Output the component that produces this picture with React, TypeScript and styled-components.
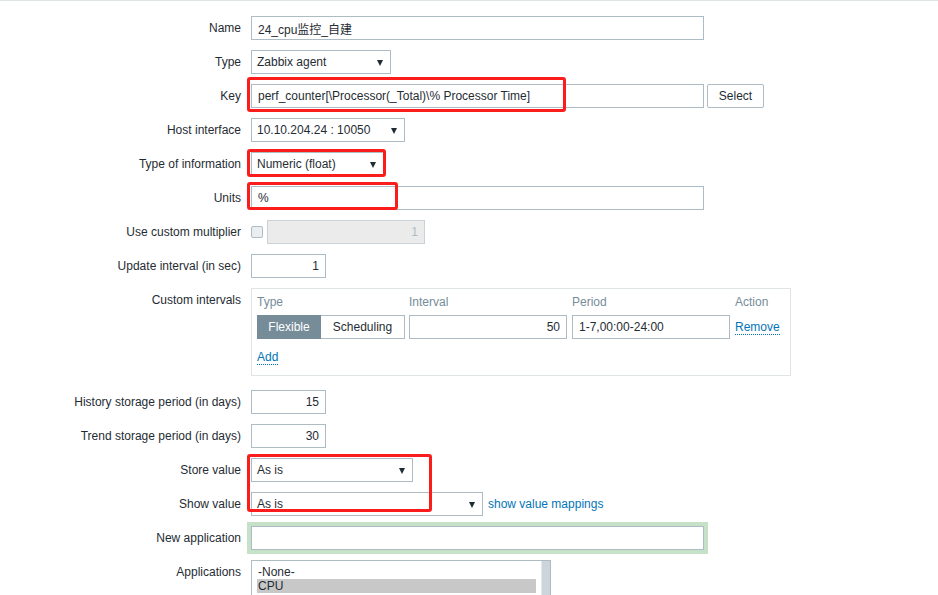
import React from "react";
import styled, { createGlobalStyle } from "styled-components";

const GlobalStyle = createGlobalStyle`
  html, body { margin: 0; padding: 0; background: #ffffff; }
  body {
    font-family: "Liberation Sans", Arial, "Noto Sans CJK SC", sans-serif;
    font-size: 12px;
    color: #1f2c33;
  }
  * { box-sizing: border-box; }
`;

const Page = styled.div`
  position: relative;
  width: 938px;
  height: 595px;
  overflow: hidden;
  background: #ffffff;
`;

const TopRule = styled.div`
  height: 1px;
  background: #dfe4e7;
`;

const Form = styled.div`
  display: flex;
  flex-direction: column;
  gap: 10px;
  padding-top: 15px;
`;

const Row = styled.div<{ $top?: boolean }>`
  display: grid;
  grid-template-columns: 241px auto;
  column-gap: 10px;
  align-items: ${(p) => (p.$top ? "start" : "center")};
`;

const Label = styled.div`
  text-align: right;
  line-height: 24px;
  white-space: nowrap;
  color: #1f2c33;
`;

const Field = styled.div<{ $gap?: number }>`
  display: flex;
  align-items: center;
  gap: ${(p) => p.$gap ?? 0}px;
`;

const TextInput = styled.input<{ $w: number; $right?: boolean }>`
  width: ${(p) => p.$w}px;
  height: 24px;
  margin: 0;
  padding: 0 6px;
  border: 1px solid #acbbc4;
  border-radius: 0;
  background: #ffffff;
  color: #1f2c33;
  font-family: "Liberation Sans", Arial, "Noto Sans CJK SC", sans-serif;
  font-size: 12px;
  text-align: ${(p) => (p.$right ? "right" : "left")};
  outline: none;
  &:disabled {
    background: #ebebeb;
    color: #acbbc4;
    border-color: #c9d2d8;
  }
`;

const FocusInput = styled(TextInput)`
  box-shadow: 0 0 0 4px #c5e2c8;
`;

const Select = styled.div<{ $w: number }>`
  position: relative;
  width: ${(p) => p.$w}px;
  height: 24px;
  padding: 0 20px 0 5px;
  border: 1px solid #acbbc4;
  background: #ffffff;
  display: flex;
  align-items: center;
  white-space: nowrap;
  color: #1f2c33;
  &::after {
    content: "";
    position: absolute;
    right: 7px;
    top: 9px;
    border-left: 3.5px solid transparent;
    border-right: 3.5px solid transparent;
    border-top: 6px solid #1f2c33;
  }
`;

const Button = styled.button`
  height: 24px;
  width: 57px;
  padding: 0;
  border: 1px solid #acbbc4;
  border-radius: 2px;
  background: #ffffff;
  color: #1f2c33;
  font-family: "Liberation Sans", Arial, sans-serif;
  font-size: 12px;
`;

const CheckBox = styled.span`
  width: 12px;
  height: 12px;
  border: 1px solid #acbbc4;
  border-radius: 2px;
  background: #ebeef0;
  display: inline-block;
`;

const Link = styled.span<{ $dotted?: boolean }>`
  color: #0275b8;
  white-space: nowrap;
  line-height: 14px;
  border-bottom: ${(p) => (p.$dotted ? "1px dotted #0275b8" : "none")};
`;

const IntervalBox = styled.div`
  width: 540px;
  margin-bottom: 4px;
  padding: 6px 5px 10px;
  border: 1px solid #dfe4e7;
  display: flex;
  flex-direction: column;
  align-items: flex-start;
`;

const IntervalGrid = styled.div`
  display: grid;
  grid-template-columns: 152px 163px 163px auto;
  row-gap: 6px;
  align-items: center;
  margin-bottom: 11px;
`;

const HeadCell = styled.div`
  color: #768d99;
  line-height: 14px;
`;

const Segmented = styled.div`
  display: flex;
  height: 24px;
`;

const Segment = styled.div<{ $active?: boolean; $w: number }>`
  width: ${(p) => p.$w}px;
  height: 24px;
  display: flex;
  align-items: center;
  justify-content: center;
  border: 1px solid ${(p) => (p.$active ? "#768d99" : "#acbbc4")};
  ${(p) => (p.$active ? "" : "border-left: none;")}
  background: ${(p) => (p.$active ? "#768d99" : "#ffffff")};
  color: ${(p) => (p.$active ? "#ffffff" : "#1f2c33")};
`;

const ListBox = styled.div`
  width: 300px;
  height: 110px;
  border: 1px solid #acbbc4;
  display: flex;
  background: #ffffff;
`;

const Options = styled.div`
  flex: 1;
  padding: 4px 5px 0 5px;
  display: flex;
  flex-direction: column;
`;

const Option = styled.div<{ $selected?: boolean }>`
  line-height: 14px;
  padding-left: 1px;
  background: ${(p) => (p.$selected ? "#c8c8c8" : "transparent")};
  color: #1f2c33;
`;

const ScrollTrack = styled.div`
  width: 9px;
  background: #cdd5dc;
  border-left: 1px solid #e3e8eb;
`;

const Annotation = styled.div<{ $x: number; $y: number; $w: number; $h: number }>`
  position: absolute;
  left: ${(p) => p.$x}px;
  top: ${(p) => p.$y}px;
  width: ${(p) => p.$w}px;
  height: ${(p) => p.$h}px;
  border: 3px solid #fb1c1c;
  border-radius: 3px;
  pointer-events: none;
`;

export default function App() {
  return (
    <Page>
      <GlobalStyle />
      <TopRule />
      <Form>
        <Row>
          <Label>Name</Label>
          <Field>
            <TextInput $w={453} readOnly value="24_cpu监控_自建" />
          </Field>
        </Row>
        <Row>
          <Label>Type</Label>
          <Field>
            <Select $w={140}>Zabbix agent</Select>
          </Field>
        </Row>
        <Row>
          <Label>Key</Label>
          <Field $gap={3}>
            <TextInput $w={453} readOnly value="perf_counter[\Processor(_Total)\% Processor Time]" />
            <Button>Select</Button>
          </Field>
        </Row>
        <Row>
          <Label>Host interface</Label>
          <Field>
            <Select $w={154}>10.10.204.24 : 10050</Select>
          </Field>
        </Row>
        <Row>
          <Label>Type of information</Label>
          <Field>
            <Select $w={133}>Numeric (float)</Select>
          </Field>
        </Row>
        <Row>
          <Label>Units</Label>
          <Field>
            <TextInput $w={453} readOnly value="%" />
          </Field>
        </Row>
        <Row>
          <Label>Use custom multiplier</Label>
          <Field $gap={4}>
            <CheckBox />
            <TextInput $w={158} $right disabled value="1" />
          </Field>
        </Row>
        <Row>
          <Label>Update interval (in sec)</Label>
          <Field>
            <TextInput $w={75} $right readOnly value="1" />
          </Field>
        </Row>
        <Row $top>
          <Label>Custom intervals</Label>
          <IntervalBox>
            <IntervalGrid>
              <HeadCell>Type</HeadCell>
              <HeadCell>Interval</HeadCell>
              <HeadCell>Period</HeadCell>
              <HeadCell>Action</HeadCell>
              <Segmented>
                <Segment $active $w={64}>Flexible</Segment>
                <Segment $w={84}>Scheduling</Segment>
              </Segmented>
              <TextInput $w={158} $right readOnly value="50" />
              <TextInput $w={158} readOnly value="1-7,00:00-24:00" />
              <Link $dotted>Remove</Link>
            </IntervalGrid>
            <Link $dotted>Add</Link>
          </IntervalBox>
        </Row>
        <Row>
          <Label>History storage period (in days)</Label>
          <Field>
            <TextInput $w={75} $right readOnly value="15" />
          </Field>
        </Row>
        <Row>
          <Label>Trend storage period (in days)</Label>
          <Field>
            <TextInput $w={75} $right readOnly value="30" />
          </Field>
        </Row>
        <Row>
          <Label>Store value</Label>
          <Field>
            <Select $w={162}>As is</Select>
          </Field>
        </Row>
        <Row>
          <Label>Show value</Label>
          <Field $gap={5}>
            <Select $w={232}>As is</Select>
            <Link>show value mappings</Link>
          </Field>
        </Row>
        <Row>
          <Label>New application</Label>
          <Field>
            <FocusInput $w={453} readOnly value="" />
          </Field>
        </Row>
        <Row $top>
          <Label>Applications</Label>
          <ListBox>
            <Options>
              <Option>-None-</Option>
              <Option $selected>CPU</Option>
            </Options>
            <ScrollTrack />
          </ListBox>
        </Row>
      </Form>
      <Annotation $x={247} $y={77} $w={319} $h={35} />
      <Annotation $x={247} $y={149} $w={139} $h={28} />
      <Annotation $x={247} $y={182} $w={151} $h={28} />
      <Annotation $x={247} $y={454} $w={185} $h={58} />
    </Page>
  );
}
